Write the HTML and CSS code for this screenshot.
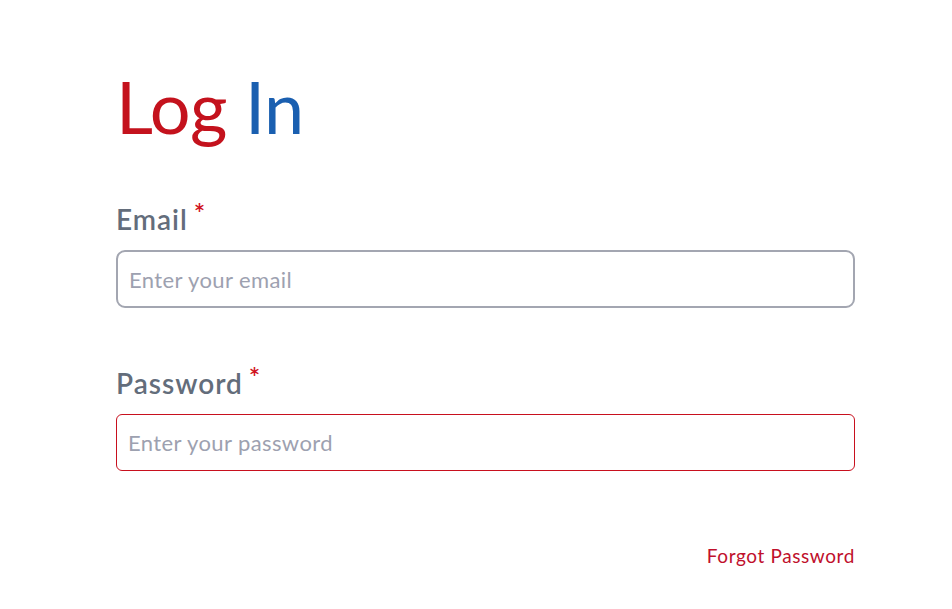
FILE: index.html
```html
<!DOCTYPE html>
<html lang="en">
<head>
<meta charset="utf-8">
<title>Log In</title>
<link rel="stylesheet" href="styles.css">
</head>
<body>
<main class="page">
  <h1 class="title"><span class="title-red">Log</span> <span class="title-blue">In</span></h1>
  <form class="form">
    <div class="field">
      <label class="label" for="email"><span class="label-text">Email</span><span class="req">*</span></label>
      <input class="input input-email" id="email" type="email" placeholder="Enter your email">
    </div>
    <div class="field">
      <label class="label" for="password"><span class="label-text">Password</span><span class="req">*</span></label>
      <input class="input input-password" id="password" type="password" placeholder="Enter your password">
    </div>
    <div class="links">
      <a class="forgot" href="#">Forgot Password</a>
    </div>
  </form>
</main>
</body>
</html>
```
FILE: styles.css
```css
html, body {
  margin: 0;
  padding: 0;
  background: #ffffff;
}
body {
  font-family: "Lato", "Open Sans", sans-serif;
}
.page {
  width: 739px;
  padding: 62px 0 0 116px;
}
.title {
  margin: 0;
  font-size: 72px;
  font-weight: 400;
  line-height: 88px;
  letter-spacing: -0.5px;
}
.title-red { color: #c4121d; }
.title-blue { color: #1a5fb0; }
.form {
  display: flex;
  flex-direction: column;
  margin-top: 52px;
}
.field {
  display: flex;
  flex-direction: column;
  margin-bottom: 58px;
}
.label {
  display: flex;
  align-items: flex-start;
  font-size: 28px;
  font-weight: 600;
  color: #636d7b;
  line-height: 34px;
  margin-bottom: 14px;
}
.label-text {
  letter-spacing: 1px;
}
.req {
  color: #d0121e;
  font-size: 27px;
  line-height: 20px;
  margin-left: 6px;
  margin-top: 1px;
}
.input {
  box-sizing: border-box;
  width: 100%;
  height: 58px;
  padding: 0 11px;
  font-family: "Lato", "Open Sans", sans-serif;
  font-size: 22px;
  letter-spacing: 0.4px;
  color: #333;
  background: #fff;
  outline: none;
}
.input::placeholder {
  color: #9da1b0;
}
.input-email {
  border: 2px solid #a3a6b1;
  border-radius: 9px;
}
.input-password {
  height: 57px;
  border: 1px solid #c8101e;
  border-radius: 6px;
}
.links {
  display: flex;
  justify-content: flex-end;
  margin-top: 15px;
}
.forgot {
  font-size: 19px;
  letter-spacing: 0.6px;
  color: #c0102c;
  text-decoration: none;
}
```
